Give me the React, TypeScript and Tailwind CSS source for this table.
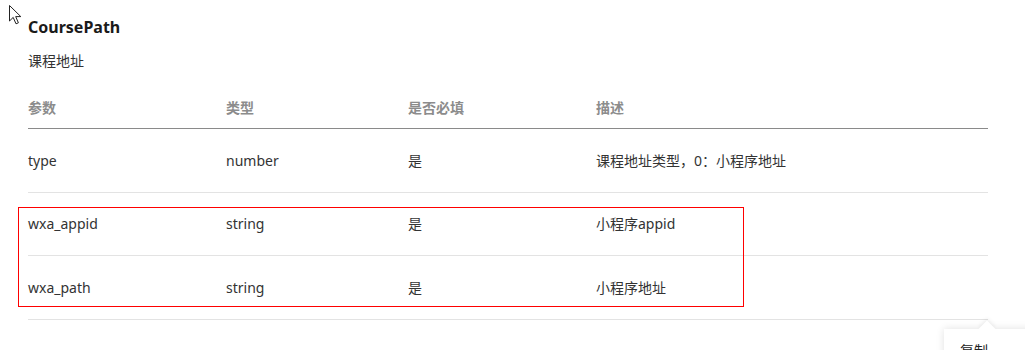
const rows = [
  { name: "type", type: "number", required: "是", desc: "课程地址类型，0：小程序地址" },
  { name: "wxa_appid", type: "string", required: "是", desc: "小程序appid" },
  { name: "wxa_path", type: "string", required: "是", desc: "小程序地址" },
]

function Cursor() {
  return (
    <svg width="16" height="22" viewBox="0 0 16 22" className="absolute left-[8px] top-[4px]">
      <path
        d="M1.5 1.5 L1.5 17 L5.2 13.4 L8 19.8 L10.4 18.8 L7.7 12.6 L12.8 12.6 Z"
        fill="#fff"
        stroke="#222"
        strokeWidth="1"
        strokeLinejoin="miter"
      />
    </svg>
  )
}

export default function App() {
  return (
    <div
      className="relative w-[1025px] h-[350px] overflow-hidden bg-white text-[#333]"
      style={{ fontFamily: '"Noto Sans", "Noto Sans CJK SC", sans-serif' }}
    >
      <Cursor />
      <div className="pl-[28px] w-[988px]">
        <h3 className="pt-[15px] text-[16px] leading-[24px] font-bold text-[#1a1a1a]">CoursePath</h3>
        <p className="mt-[11px] text-[14px] leading-[22px] text-[#333]">课程地址</p>

        <div className="mt-[14px] text-[14px]">
          <div className="grid grid-cols-[198px_182px_188px_1fr] h-[43px] items-center border-b border-[#8a8a8a] font-bold text-[#8c8c8c]">
            <div>参数</div>
            <div>类型</div>
            <div>是否必填</div>
            <div>描述</div>
          </div>
          {rows.map((row) => (
            <div
              key={row.name}
              className="grid grid-cols-[198px_182px_188px_1fr] h-[63.6px] items-center border-b border-[#e3e3e3]"
            >
              <div>{row.name}</div>
              <div>{row.type}</div>
              <div>{row.required}</div>
              <div>{row.desc}</div>
            </div>
          ))}
        </div>
      </div>

      {/* highlight annotation */}
      <div className="absolute left-[18px] top-[207px] w-[726px] h-[100px] border border-[#ff0000]" />

      {/* copy popover */}
      <div className="absolute left-[944px] top-[329px] w-[110px] h-[60px] bg-white shadow-[0_0_8px_rgba(0,0,0,0.12)]">
        <div className="absolute -top-[6px] left-[37px] w-[12px] h-[12px] rotate-45 bg-white shadow-[-2px_-2px_4px_rgba(0,0,0,0.06)]" />
        <div className="relative bg-white pl-[16px] pt-[12px] text-[14px] leading-[20px] text-[#222]">复制</div>
      </div>
    </div>
  )
}
